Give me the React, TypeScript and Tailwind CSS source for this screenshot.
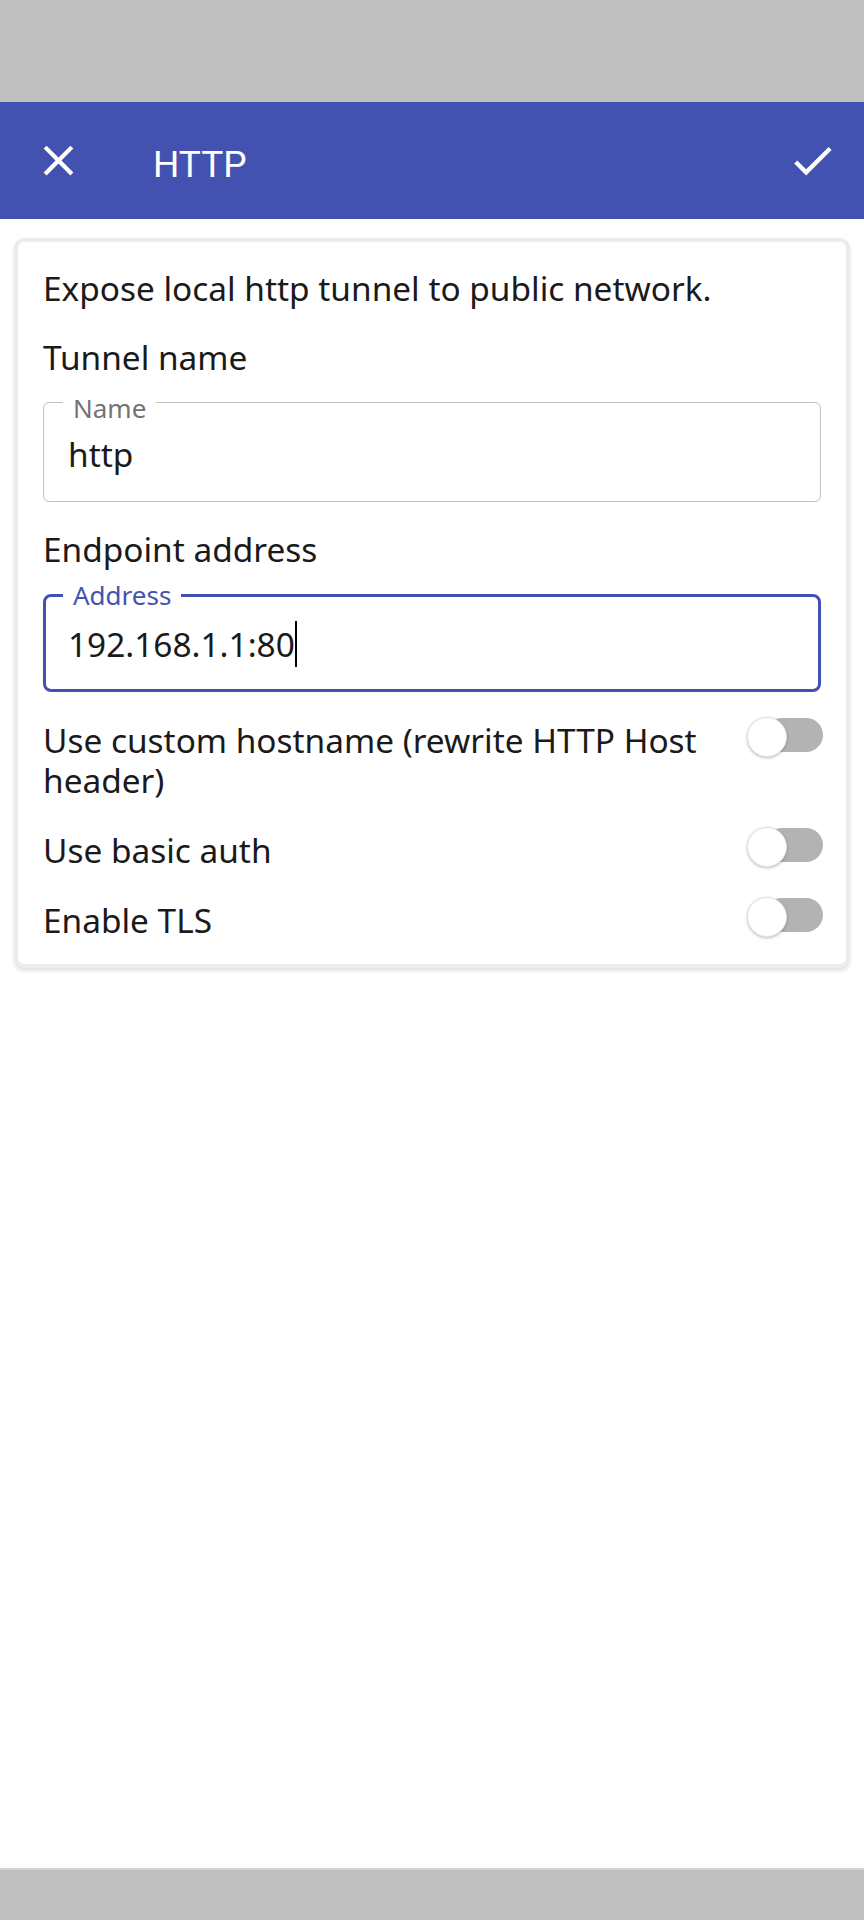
import React from 'react';

function Toggle() {
  return (
    <div className="relative -mt-[3px] -mr-[2px] h-[40px] w-[76px] shrink-0">
      <div className="absolute right-0 top-[1px] h-[34px] w-[58px] rounded-full bg-[#b3b3b3]" />
      <div className="absolute left-0 top-0 h-[40px] w-[40px] rounded-full border border-[#e2e2e2] bg-white shadow-[0_1px_3px_rgba(0,0,0,0.25)]" />
    </div>
  );
}

function SwitchRow({ label }: { label: string }) {
  return (
    <div className="flex items-start justify-between">
      <p className="flex-1 pr-[4px]">{label}</p>
      <Toggle />
    </div>
  );
}

export default function App() {
  return (
    <div
      className="flex h-[1920px] w-[864px] flex-col bg-white text-[#1a1a1a]"
      style={{ fontFamily: '"Noto Sans", sans-serif' }}
    >
      <div className="h-[102px] bg-[#bfbfbf]" />

      <header className="flex h-[117px] items-center bg-[#4352b0] pl-[33px] pr-[26px] text-white">
        <svg width="51" height="51" viewBox="0 0 24 24" fill="white">
          <path d="M19 6.41L17.59 5 12 10.59 6.41 5 5 6.41 10.59 12 5 17.59 6.41 19 12 13.41 17.59 19 19 17.59 13.41 12z" />
        </svg>
        <h1
          className="ml-[69px] mt-[8px] text-[37px] leading-[37px]"
          style={{ fontFamily: 'Roboto, sans-serif' }}
        >
          HTTP
        </h1>
        <div className="flex-1" />
        <svg width="51" height="51" viewBox="0 0 24 24" fill="white">
          <path d="M9 16.17L4.83 12l-1.42 1.41L9 19 21 7l-1.41-1.41z" />
        </svg>
      </header>

      <main className="flex-1">
        <div className="mx-[14px] mt-[19px] rounded-[10px] border-[4px] border-[#ececec] bg-white px-[25px] pb-[24px] pt-[26px] text-[33.4px] leading-[40px] shadow-[0_3px_4px_rgba(0,0,0,0.12)]">
          <p>Expose local http tunnel to public network.</p>

          <p className="mt-[29px]">Tunnel name</p>
          <div className="relative mt-[25px] h-[100px] rounded-[6px] border border-[#c2c2c2] pl-[24px] pt-[31px]">
            <span className="absolute -top-[8px] left-[19px] bg-white px-[10px] text-[26px] leading-[26px] text-[#737373]">
              Name
            </span>
            <p>http</p>
          </div>

          <p className="mt-[27px]">Endpoint address</p>
          <div className="relative mt-[25px] h-[98px] rounded-[8px] border-[3px] border-[#4352b0] pl-[22px] pt-[27px]">
            <span className="absolute -top-[15px] left-[17px] bg-white px-[10px] text-[26px] leading-[26px] text-[#4352b0]">
              Address
            </span>
            <p>
              <span className="border-r-[2px] border-black">192.168.1.1:80</span>
            </p>
          </div>

          <div className="mt-[28px] flex flex-col gap-[30px]">
            <SwitchRow label="Use custom hostname (rewrite HTTP Host header)" />
            <SwitchRow label="Use basic auth" />
            <SwitchRow label="Enable TLS" />
          </div>
        </div>
      </main>

      <div className="h-[52px] border-t-[2px] border-[#d3d3d3] bg-[#bfbfbf]" />
    </div>
  );
}
